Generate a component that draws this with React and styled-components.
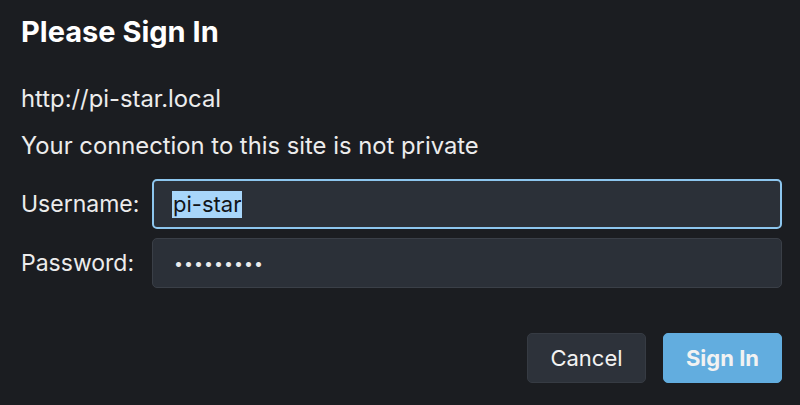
import styled, { createGlobalStyle } from "styled-components";

const GlobalStyle = createGlobalStyle`
  html, body {
    margin: 0;
    padding: 0;
    background: #1b1d21;
  }
  body {
    font-family: Inter, "Liberation Sans", sans-serif;
    color: #ececec;
  }
`

// sign in dialog
const App = () => {
  return (
    <>
      <GlobalStyle />
      <Dialog>
        <Title>Please Sign In</Title>
        <Info>http://pi-star.local</Info>
        <Info>Your connection to this site is not private</Info>
        <Form>
          <Label>Username:</Label>
          <Field focused>
            <Selected>pi-star</Selected>
          </Field>
          <Label>Password:</Label>
          <Field>
            <Dots>•••••••••</Dots>
          </Field>
        </Form>
        <Buttons>
          <Button>Cancel</Button>
          <Button primary>Sign In</Button>
        </Buttons>
      </Dialog>
    </>
  )
}

const Dialog = styled.div`
  width: 800px;
  height: 405px;
  box-sizing: border-box;
  padding: 15px 18px 0 21px;
  display: flex;
  flex-direction: column;
`

const Title = styled.h1`
  margin: 0 0 18px 0;
  font-size: 29px;
  line-height: 34px;
  font-weight: 700;
  color: #ffffff;
`

const Info = styled.div`
  font-size: 23.8px;
  line-height: 30px;
  margin-top: 17px;
`

const Form = styled.div`
  display: grid;
  grid-template-columns: 131px 1fr;
  grid-auto-rows: 50px;
  row-gap: 9px;
  align-items: center;
  margin-top: 18px;
`

const Label = styled.div`
  font-size: 23px;
`

const Field = styled.div`
  height: 100%;
  box-sizing: border-box;
  display: flex;
  align-items: center;
  border-radius: 5px;
  background: #2b3038;
  border: ${p => p.focused ? "2px solid #8dc6ee" : "1px solid #3a3f47"};
  padding-left: ${p => p.focused ? "18px" : "19px"};
  font-size: 22px;
`

const Selected = styled.span`
  background: #a8d6fa;
  color: #111418;
  line-height: 27px;
  padding: 0 1px;
`

const Dots = styled.span`
  letter-spacing: 1px;
  font-size: 16px;
  padding-left: 2px;
`

const Buttons = styled.div`
  display: flex;
  justify-content: flex-end;
  gap: 17px;
  margin-top: 45px;
`

const Button = styled.button`
  width: 119px;
  height: 50px;
  border-radius: 5px;
  font-family: inherit;
  font-size: 22px;
  font-weight: ${p => p.primary ? 700 : 400};
  color: #f2f2f2;
  background: ${p => p.primary ? "#62addf" : "#2d323a"};
  border: 1px solid ${p => p.primary ? "#62addf" : "#363b43"};
`

export default App;
